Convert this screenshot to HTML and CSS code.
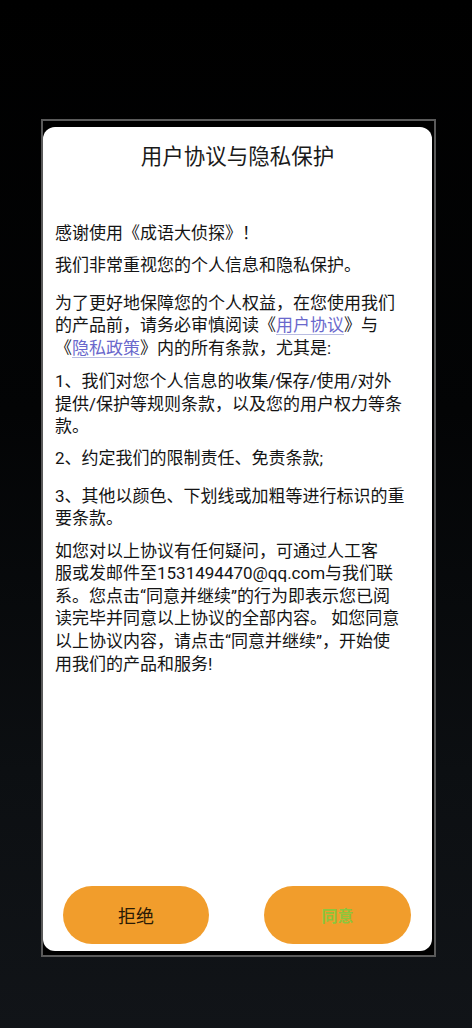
FILE: index.html
```html
<!DOCTYPE html>
<html lang="zh-CN">
<head>
<meta charset="utf-8">
<title>用户协议与隐私保护</title>
<link rel="stylesheet" href="styles.css">
</head>
<body>
<div class="screen">
  <div class="frame">
    <div class="card">
      <h1 class="title">用户协议与隐私保护</h1>
      <div class="content">
        <p class="para">感谢使用《成语大侦探》！</p>
        <p class="para para-wide">我们非常重视您的个人信息和隐私保护。</p>
        <p class="para para-mid">为了更好地保障您的个人权益，在您使用我们的产品前，请务必审慎阅读《<span class="link">用户协议</span>》与《<span class="link">隐私政策</span>》内的所有条款，尤其是:</p>
        <p class="para">1、我们对您个人信息的收集/保存/使用/对外提供/保护等规则条款，以及您的用户权力等条款。</p>
        <p class="para para-wide">2、约定我们的限制责任、免责条款;</p>
        <p class="para">3、其他以颜色、下划线或加粗等进行标识的重要条款。</p>
        <p class="para">如您对以上协议有任何疑问，可通过人工客<br>服或发邮件至1531494470@qq.com与我们联系。您点击“同意并继续”的行为即表示您已阅读完毕并同意以上协议的全部内容。 如您同意以上协议内容，请点击“同意并继续”，开始使用我们的产品和服务!</p>
      </div>
      <div class="actions">
        <button class="btn btn-reject">拒绝</button>
        <button class="btn btn-agree">同意</button>
      </div>
    </div>
  </div>
</div>
</body>
</html>
```

FILE: styles.css
```css
* {
  box-sizing: border-box;
}

html, body {
  margin: 0;
  padding: 0;
}

body {
  width: 472px;
  height: 1028px;
  overflow: hidden;
  background: linear-gradient(180deg, #000000 0%, #030405 40%, #0c0f12 75%, #111418 100%);
  font-family: Roboto, "Noto Sans CJK SC", sans-serif;
}

.screen {
  padding: 119px 0 0 41px;
}

.frame {
  width: 395px;
  height: 838px;
  border: 2px solid #5a5a5a;
  background: #000;
  padding: 6px 2px 4px 0;
}

.card {
  height: 100%;
  background: #ffffff;
  border-radius: 12px;
  display: flex;
  flex-direction: column;
  padding: 13px 0 7px 0;
}

.title {
  margin: 0;
  font-family: "Noto Sans CJK SC", sans-serif;
  font-weight: 400;
  font-size: 21.5px;
  line-height: 30px;
  color: #1a1a1a;
  text-align: center;
}

.content {
  margin-top: 52px;
  padding: 0 27px 0 12px;
  color: #141414;
  font-size: 17px;
  line-height: 22.6px;
}

.para {
  margin: 0 0 9.5px 0;
}

.para.para-mid {
  margin-bottom: 10.5px;
}

.para.para-wide {
  margin-bottom: 15px;
}

.link {
  color: #6a68cc;
  text-decoration: underline;
  text-decoration-color: #b9bde2;
  text-underline-offset: 3px;
}

.actions {
  margin-top: auto;
  display: flex;
  justify-content: space-between;
  padding: 0 21px 0 20px;
}

.btn {
  width: 146px;
  height: 58px;
  border: none;
  border-radius: 29px;
  background: #f19d2c;
  font-family: "Noto Sans CJK SC", sans-serif;
  padding: 0;
}

.btn-reject {
  color: #2a1a06;
  font-size: 18px;
}

.btn-agree {
  width: 147px;
  color: #8cc63c;
  font-size: 16px;
  font-weight: 700;
}
```
